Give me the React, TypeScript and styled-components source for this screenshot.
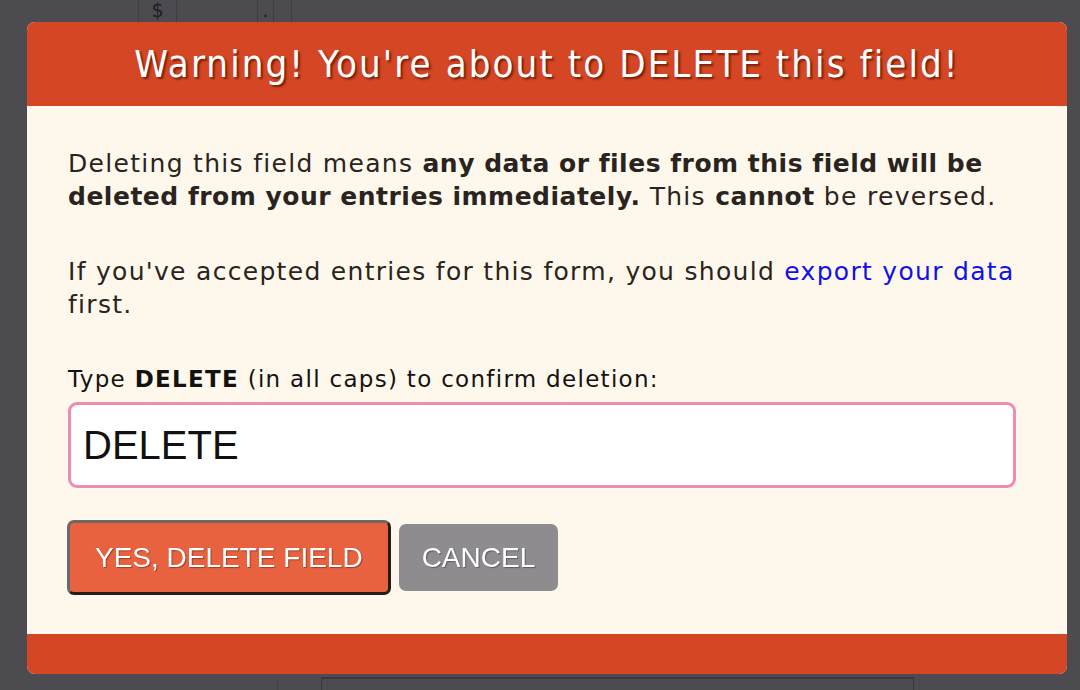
import React from 'react';
import styled, { createGlobalStyle } from 'styled-components';

const GlobalStyle = createGlobalStyle`
  html, body {
    margin: 0;
    padding: 0;
    background: #4c4b50;
    height: 100%;
    overflow: hidden;
  }
  #root {
    height: 100%;
  }
`;

// form behind the overlay
const Backdrop = styled.div`
  height: 690px;
  display: flex;
  flex-direction: column;
  justify-content: space-between;
  font-family: 'DejaVu Sans', sans-serif;
`;

const PriceRow = styled.div`
  display: flex;
  margin-left: 138px;
  height: 22px;
`;

const PriceCell = styled.div`
  width: ${(props: { w: number }) => props.w}px;
  border-left: 1px solid #3f3e43;
  color: #1e1e20;
  font-size: 19px;
  line-height: 21px;
  text-align: center;
  overflow: hidden;
  &:last-child {
    border-right: 1px solid #3f3e43;
  }
`;

const BottomRow = styled.div`
  display: flex;
  height: 13px;
  padding-left: 277px;
`;

const Divider = styled.div`
  width: 43px;
  border-left: 1px solid #434247;
`;

const FieldBox = styled.div`
  width: 591px;
  border-top: 2px solid #38373b;
  border-left: 1px solid #38373b;
  border-right: 1px solid #38373b;
`;

// modal
const Overlay = styled.div`
  position: fixed;
  inset: 0;
  padding: 22px 13px 16px 27px;
  box-sizing: border-box;
`;

const Modal = styled.div`
  height: 652px;
  border-radius: 8px;
  overflow: hidden;
  background: #fef8ec;
  display: flex;
  flex-direction: column;
`;

const Header = styled.div`
  background: #d44624;
  height: 84px;
  display: flex;
  align-items: center;
  justify-content: center;
  flex-shrink: 0;
`;

const Title = styled.h1`
  margin: 0;
  font-family: 'DejaVu Sans Condensed', 'DejaVu Sans', sans-serif;
  font-stretch: condensed;
  font-weight: 400;
  font-size: 38px;
  color: #ffffff;
  text-shadow: 2px 2px 2px rgba(90, 20, 0, 0.75);
  letter-spacing: 2.1px;
`;

const Body = styled.div`
  flex: 1;
  padding: 41px 42px 0 41px;
  font-family: 'DejaVu Sans', 'Lucida Grande', sans-serif;
  font-size: 25px;
  letter-spacing: 1.3px;
  line-height: 33px;
  color: #2a2421;
`;

const Paragraph = styled.p`
  margin: 0 0 42px;
  strong {
    font-weight: 700;
    letter-spacing: 0.5px;
  }
`;

const Link = styled.a`
  color: #1010e8;
  text-decoration: none;
`;

const Label = styled.label`
  display: block;
  color: #141210;
  font-size: 23px;
  letter-spacing: 1.3px;
  margin-top: 5px;
  strong {
    font-weight: 700;
  }
`;

const Input = styled.input`
  display: block;
  box-sizing: border-box;
  width: 948px;
  height: 86px;
  margin-top: 6px;
  padding: 0 12px;
  border: 3px solid #ec8cb0;
  border-radius: 9px;
  background: #ffffff;
  font-family: 'Liberation Sans', Arial, sans-serif;
  font-size: 40px;
  letter-spacing: 0;
  color: #111111;
  caret-color: #111111;
  outline: none;
`;

const Actions = styled.div`
  display: flex;
  align-items: center;
  gap: 8px;
  margin-top: 32px;
  margin-left: -1px;
`;

const Button = styled.button`
  font-family: 'Liberation Sans', Arial, sans-serif;
  font-size: 28px;
  letter-spacing: 0;
  color: #ffffff;
  text-shadow: 1px 1px 1px rgba(0, 0, 0, 0.35);
  border-radius: 7px;
  cursor: pointer;
  box-sizing: border-box;
  height: ${(props: { primary?: boolean }) => (props.primary ? '75px' : '67px')};
  padding: ${(props: { primary?: boolean }) => (props.primary ? '0 25px' : '0 23px')};
  background: ${(props: { primary?: boolean }) => (props.primary ? '#e8623f' : '#8e8c8f')};
  border: ${(props: { primary?: boolean }) => (props.primary ? '3px solid #221c1a' : 'none')};
  border-top-color: ${(props: { primary?: boolean }) => (props.primary ? '#6d6765' : 'transparent')};
  border-left-color: ${(props: { primary?: boolean }) => (props.primary ? '#6d6765' : 'transparent')};
`;

const Footer = styled.div`
  background: #d44624;
  height: 40px;
  flex-shrink: 0;
`;

const App: React.FC = () => {
  return (
    <>
      <GlobalStyle />
      <Backdrop>
        <PriceRow>
          <PriceCell w={37}>$</PriceCell>
          <PriceCell w={80} />
          <PriceCell w={15}>.</PriceCell>
          <PriceCell w={17} />
        </PriceRow>
        <BottomRow>
          <Divider />
          <FieldBox />
        </BottomRow>
      </Backdrop>
      <Overlay>
        <Modal>
          <Header>
            <Title>Warning! You're about to DELETE this field!</Title>
          </Header>
          <Body>
            <Paragraph>
              Deleting this field means{' '}
              <strong>any data or files from this field will be deleted from your entries immediately.</strong>{' '}
              This <strong>cannot</strong> be reversed.
            </Paragraph>
            <Paragraph>
              If you've accepted entries for this form, you should <Link href="#">export your data</Link> first.
            </Paragraph>
            <Label htmlFor="confirm">
              Type <strong>DELETE</strong> (in all caps) to confirm deletion:
            </Label>
            <Input id="confirm" defaultValue="DELETE" autoFocus />
            <Actions>
              <Button primary>YES, DELETE FIELD</Button>
              <Button>CANCEL</Button>
            </Actions>
          </Body>
          <Footer />
        </Modal>
      </Overlay>
    </>
  );
};

export default App;
